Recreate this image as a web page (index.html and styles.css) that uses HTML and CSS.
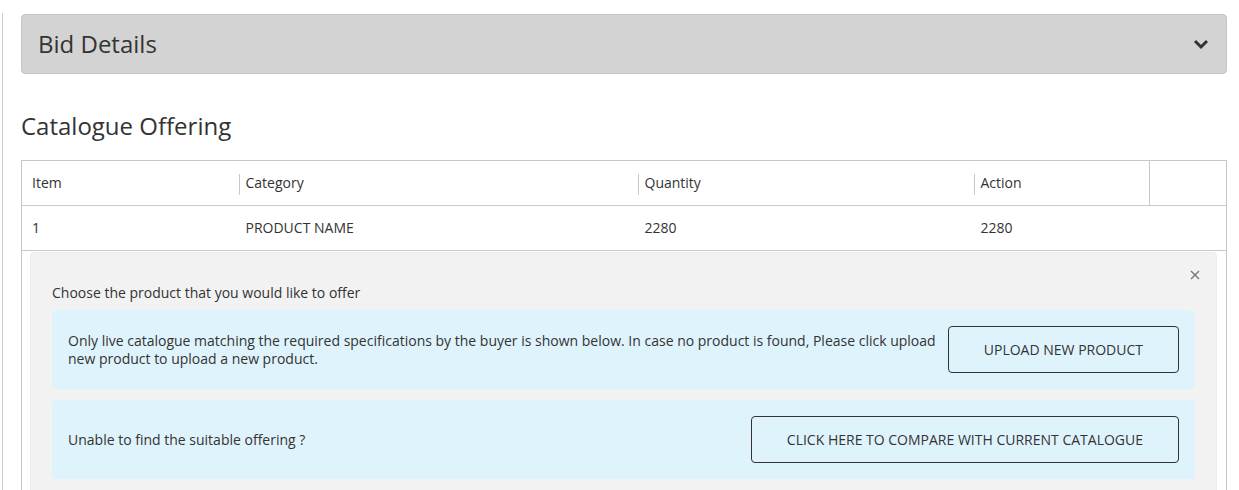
FILE: index.html
```html
<!DOCTYPE html>
<html>
<head>
    <title>Catalogue Offering</title>
    <link rel="stylesheet" href="styles.css">
</head>
<body>
    <div class="page">
        <div class="bid-bar">
            <h2>Bid Details</h2>
            <svg class="chevron" width="16" height="11" viewBox="0 0 16 11">
                <polyline points="2,2 8,8 14,2" fill="none" stroke="#333" stroke-width="3"/>
            </svg>
        </div>

        <h2 class="section-title">Catalogue Offering</h2>

        <table class="offer-table">
            <colgroup>
                <col style="width:217px">
                <col style="width:399px">
                <col style="width:336px">
                <col style="width:176px">
                <col>
            </colgroup>
            <thead>
                <tr>
                    <th>Item</th>
                    <th>Category</th>
                    <th>Quantity</th>
                    <th>Action</th>
                    <th class="empty"></th>
                </tr>
            </thead>
            <tbody>
                <tr>
                    <td>1</td>
                    <td>PRODUCT NAME</td>
                    <td>2280</td>
                    <td>2280</td>
                    <td></td>
                </tr>
                <tr>
                    <td colspan="5" class="panel-cell">
                        <div class="offer-panel">
                            <button class="close" aria-label="Close">
                                <svg width="10" height="10" viewBox="0 0 10 10">
                                    <path d="M1,1 L9,9 M9,1 L1,9" stroke="#777" stroke-width="1.4"/>
                                </svg>
                            </button>
                            <p class="panel-lead">Choose the product that you would like to offer</p>
                            <div class="info-box">
                                <p>Only live catalogue matching the required specifications by the buyer is shown below. In case no product is found, Please click upload new product to upload a new product.</p>
                                <button class="outline-btn">UPLOAD NEW PRODUCT</button>
                            </div>
                            <div class="info-box">
                                <p>Unable to find the suitable offering ?</p>
                                <button class="outline-btn">CLICK HERE TO COMPARE WITH CURRENT CATALOGUE</button>
                            </div>
                        </div>
                    </td>
                </tr>
            </tbody>
        </table>
    </div>
</body>
</html>
```

FILE: styles.css
```css
html, body {
    margin: 0;
    padding: 0;
    font-family: 'Open Sans', 'Noto Sans', sans-serif;
    background-color: #fff;
    color: #333;
}

.page {
    margin: 13px 12px 0 2px;
    padding: 1px 0 0 18px;
    border-left: 1px solid #ccc;
    min-height: 477px;
}

.bid-bar {
    display: flex;
    align-items: center;
    justify-content: space-between;
    padding: 13px 17px 13px 16px;
    background-color: #d3d3d3;
    border: 1px solid #c6c6c6;
    border-radius: 4px;
}

.bid-bar h2,
.section-title {
    margin: 0;
    font-size: 24px;
    line-height: 32px;
    font-weight: 400;
    color: #333;
}

.section-title {
    margin: 36px 0 18px;
}

.offer-table {
    width: 100%;
    border-collapse: collapse;
    table-layout: fixed;
    border: 1px solid #c8c8c8;
    border-bottom: none;
    font-size: 14px;
    line-height: 20px;
}

.offer-table th,
.offer-table td {
    text-align: left;
    font-weight: 400;
    padding: 12px 7px;
    border-bottom: 1px solid #c8c8c8;
}

.offer-table th:first-child,
.offer-table td:first-child {
    padding-left: 10px;
}

.offer-table th {
    position: relative;
}

.offer-table th + th::before {
    content: "";
    position: absolute;
    left: 0;
    top: 13px;
    bottom: 10px;
    width: 1px;
    background-color: #c8c8c8;
}

.offer-table th.empty {
    border-left: 1px solid #c8c8c8;
}

.offer-table th.empty::before {
    display: none;
}

.offer-table td.panel-cell {
    padding: 1px 9px 0 8px;
    border-bottom: none;
}

.offer-panel {
    position: relative;
    padding: 31px 21px 22px;
    background-color: #f2f2f2;
    border: 1px solid #ededed;
    border-radius: 4px 4px 0 0;
    font-size: 14px;
    line-height: 18px;
}

.close {
    position: absolute;
    top: 17px;
    right: 16px;
    padding: 0;
    border: none;
    background: none;
    line-height: 0;
    cursor: pointer;
}

.panel-lead {
    margin: 0 0 8px;
}

.info-box {
    display: flex;
    align-items: center;
    justify-content: space-between;
    gap: 12px;
    padding: 16px;
    background-color: #dff3fc;
    border-radius: 4px;
}

.info-box + .info-box {
    margin-top: 11px;
}

.info-box p {
    margin: 0;
    flex: 1;
}

.outline-btn {
    flex-shrink: 0;
    padding: 14px 35px;
    font-family: inherit;
    font-size: 14px;
    line-height: 17px;
    color: #333;
    background: transparent;
    border: 1px solid #333;
    border-radius: 4px;
    cursor: pointer;
}
```
